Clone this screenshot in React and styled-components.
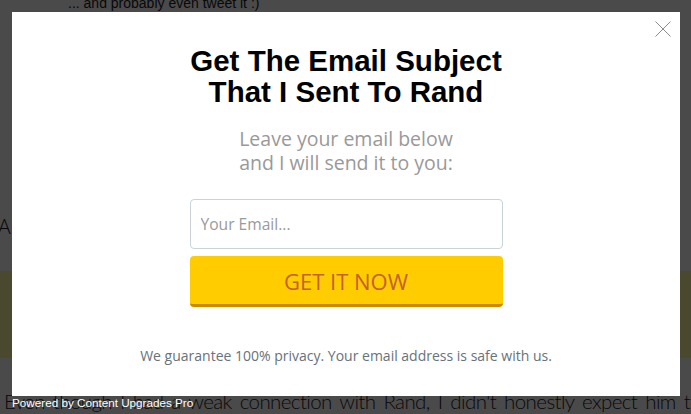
import React from 'react';
import styled, { createGlobalStyle } from 'styled-components';

const GlobalStyle = createGlobalStyle`
  html, body {
    margin: 0;
    padding: 0;
    width: 691px;
    height: 414px;
    overflow: hidden;
  }
  #root {
    height: 100%;
  }
`;

const Page = styled.div`
  position: relative;
  width: 691px;
  height: 414px;
  overflow: hidden;
  background: #fff;
  display: flex;
  flex-direction: column;
`;

const TopLine = styled.p`
  margin: -5px 0 0 68px;
  font-family: "Liberation Sans", Arial, sans-serif;
  font-size: 14px;
  line-height: 16px;
  color: #222;
`;

const SideLine = styled.p`
  margin: 200px 0 0 -2px;
  font-family: "Open Sans", sans-serif;
  font-weight: 300;
  font-size: 21px;
  line-height: 30px;
  color: #222;
`;

const Band = styled.div`
  flex-shrink: 0;
  height: 87px;
  margin-top: 30px;
  background: #fffca6;
`;

const BottomLine = styled.p`
  margin: 28px 0 0 4px;
  white-space: nowrap;
  font-family: Lato, "Open Sans", sans-serif;
  font-weight: 300;
  font-size: 20.5px;
  letter-spacing: -0.6px;
  word-spacing: 3px;
  line-height: 30px;
  color: #222;
`;

const Overlay = styled.div`
  position: absolute;
  inset: 0;
  background: rgba(0, 0, 0, 0.71);
  padding: 12px 11px 18px 12px;
  display: flex;
`;

const Modal = styled.div`
  position: relative;
  flex: 1;
  background: #fff;
  display: flex;
  flex-direction: column;
  align-items: center;
  padding-top: 33px;
`;

const Close = styled.button`
  position: absolute;
  top: 8px;
  right: 8px;
  width: 18px;
  height: 18px;
  padding: 0;
  border: 0;
  background: none;
  display: flex;
`;

const Title = styled.h1`
  margin: 0;
  font-family: "Liberation Sans", Arial, sans-serif;
  font-weight: 700;
  font-size: 29.5px;
  line-height: 31px;
  color: #000;
  text-align: center;
`;

const Subtitle = styled.p`
  margin: 20px 0 0;
  font-family: "Open Sans", sans-serif;
  font-size: 19.5px;
  line-height: 24px;
  color: #999;
  text-align: center;
`;

const Form = styled.form`
  margin-top: 24px;
  width: 313px;
  display: flex;
  flex-direction: column;
  gap: 7px;
`;

const EmailInput = styled.input`
  box-sizing: border-box;
  width: 100%;
  height: 50px;
  padding: 0 10px;
  border: 1px solid #c9d3d8;
  border-radius: 4px;
  font-family: "Open Sans", sans-serif;
  font-size: 15.6px;
  color: #333;
  outline: none;

  &::placeholder {
    color: #9a9a9a;
  }
`;

const Submit = styled.button`
  box-sizing: border-box;
  width: 100%;
  height: 51px;
  border: 0;
  border-bottom: 3px solid #cc8a00;
  border-radius: 4px;
  background: #ffcc00;
  font-family: "Open Sans", sans-serif;
  font-size: 22px;
  color: #c4622d;
  padding: 2px 0 0;
  cursor: pointer;
`;

const Privacy = styled.p`
  margin: 39px 0 0;
  font-family: "Open Sans", sans-serif;
  font-size: 14px;
  line-height: 20px;
  color: #67727a;
  text-align: center;
`;

const Powered = styled.div`
  position: absolute;
  left: 12px;
  bottom: 5px;
  font-family: "Liberation Sans", Arial, sans-serif;
  font-size: 11.7px;
  line-height: 13px;
  color: #fff;
`;

export default function App() {
  return (
    <>
      <GlobalStyle />
      <Page>
        <TopLine>... and probably even tweet it :)</TopLine>
        <SideLine>And</SideLine>
        <Band />
        <BottomLine>Even though I had a weak connection with Rand, I didn't honestly expect him to</BottomLine>
        <Overlay>
          <Modal>
            <Close aria-label="Close">
              <svg width="18" height="18" viewBox="0 0 18 18">
                <path d="M1.5 1.5 L16.5 16.5 M16.5 1.5 L1.5 16.5" stroke="#8c8c8c" strokeWidth="1" fill="none" />
              </svg>
            </Close>
            <Title>
              Get The Email Subject
              <br />
              That I Sent To Rand
            </Title>
            <Subtitle>
              Leave your email below
              <br />
              and I will send it to you:
            </Subtitle>
            <Form onSubmit={(e) => e.preventDefault()}>
              <EmailInput type="email" placeholder="Your Email..." />
              <Submit type="submit">GET IT NOW</Submit>
            </Form>
            <Privacy>We guarantee 100% privacy. Your email address is safe with us.</Privacy>
          </Modal>
        </Overlay>
        <Powered>Powered by Content Upgrades Pro</Powered>
      </Page>
    </>
  );
}
